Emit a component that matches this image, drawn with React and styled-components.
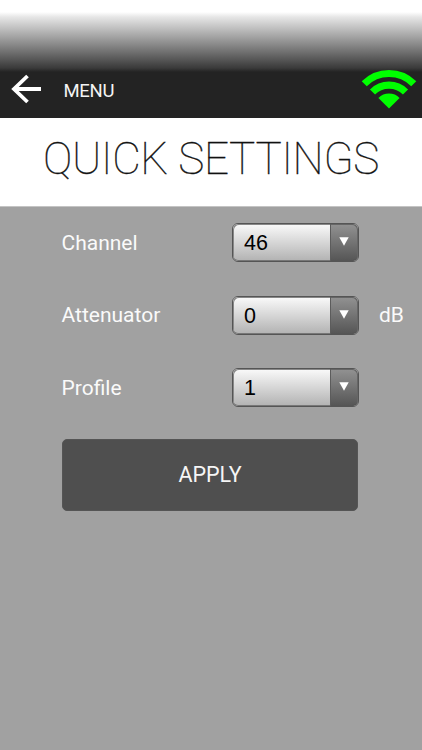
import React from "react";
import styled, { createGlobalStyle } from "styled-components";

const GlobalStyle = createGlobalStyle`
    * {
        box-sizing: border-box;
    }

    body {
        margin: 0;
        background: #a1a1a1;
        font-family: Roboto, sans-serif;
    }
`;

const Page = styled.div`
    display: flex;
    flex-direction: column;
    height: 750px;
    overflow: hidden;
    background: #a1a1a1;
`;

const StatusFade = styled.div`
    flex: none;
    height: 72px;
    background: linear-gradient(#fff 12px, #e6e6e6 17px, #3a3a3a 68px, #232323 72px);
`;

const NavBar = styled.div`
    display: flex;
    flex: none;
    align-items: center;
    height: 46px;
    padding: 0 5px 0 11px;
    background: #232323;
`;

const BackIcon = styled.svg`
    width: 31px;
    height: 30px;
    margin-top: -12px;
`;

const MenuLabel = styled.div`
    flex: 1;
    margin: -9px 0 0 21.5px;
    color: #f4f4f4;
    font-size: 18.5px;
    line-height: 24px;
    letter-spacing: -0.3px;
`;

const SignalIcon = styled.svg`
    width: 56px;
    height: 42px;
    margin-top: -11px;
`;

const Title = styled.div`
    flex: none;
    height: 89px;
    padding-top: 15px;
    border-bottom: 1px solid #c4c4c4;
    background: #fff;
    color: #111;
    font-size: 44px;
    font-weight: 100;
    line-height: 52px;
    letter-spacing: -0.3px;
    text-align: center;
    white-space: nowrap;
    -webkit-text-stroke: 0.3px #111;
`;

const Form = styled.div`
    display: flex;
    flex-direction: column;
    padding: 16px 0 0 61.5px;
`;

const Row = styled.div`
    display: flex;
    align-items: center;
    height: 39px;
    margin-bottom: 33.5px;
`;

const Label = styled.div`
    width: 170.5px;
    color: #fafafa;
    font-size: 21px;
    line-height: 26px;
`;

const Select = styled.div`
    display: flex;
    width: 127px;
    height: 39px;
    border: 1px solid #555;
    border-radius: 6px;
    background: linear-gradient(#fafafa, #b2b2b2);
    overflow: hidden;
`;

const Value = styled.div`
    flex: 1;
    padding: 1px 0 0 11px;
    border-radius: 5px 0 0 5px;
    box-shadow: inset 1px 1px 0 #888, inset 0 -1px 0 #777;
    color: #000;
    font-family: "Liberation Sans", Arial, sans-serif;
    font-size: 21.5px;
    line-height: 36px;
`;

const ArrowBox = styled.div`
    display: flex;
    justify-content: center;
    width: 28px;
    padding: 13px 2px 0 0;
    border-left: 1px solid #5c5c5c;
    border-radius: 0 5px 5px 0;
    background: linear-gradient(#929292, #555);
    box-shadow: inset -1px 1px 0 #666, inset 0 -1px 0 #555;
`;

const Unit = styled.div`
    margin-left: 20px;
    color: #fafafa;
    font-size: 21px;
    line-height: 26px;
`;

const ApplyButton = styled.button`
    width: 296px;
    height: 72px;
    margin: -2px 0 0 0.5px;
    padding: 0;
    border: 1px solid #555;
    border-radius: 5px;
    background: #4f4f4f;
    color: #f6f6f6;
    font-family: Roboto, sans-serif;
    font-size: 21.5px;
`;

const fields = [
    { label: "Channel", value: "46" },
    { label: "Attenuator", value: "0", unit: "dB" },
    { label: "Profile", value: "1" },
];

const Dropdown = ({ value }) => (
    <Select>
        <Value>{value}</Value>
        <ArrowBox>
            <svg width="10" height="9" viewBox="0 0 10 9">
                <path d="M0.3 0.3H9.7L5 8.7Z" fill="#fff" />
            </svg>
        </ArrowBox>
    </Select>
);

const App = () => (
    <>
        <GlobalStyle />
        <Page>
            <StatusFade />
            <NavBar>
                <BackIcon viewBox="0 0 31 30">
                    <path
                        d="M16.5 2L3 15L16.5 28M3 15H30"
                        fill="none"
                        stroke="#fff"
                        strokeWidth="3.8"
                    />
                </BackIcon>
                <MenuLabel>MENU</MenuLabel>
                <SignalIcon viewBox="0 0 56 42">
                    <g fill="none" stroke="#0f0" strokeWidth="7.2">
                        <path d="M3.25 14.75A35 35 0 0 1 52.75 14.75" />
                        <path d="M11.5 23A23.3 23.3 0 0 1 44.5 23" />
                    </g>
                    <path
                        d="M17.4 28.9A15 15 0 0 1 38.6 28.9L28 39.5Z"
                        fill="#0f0"
                    />
                </SignalIcon>
            </NavBar>
            <Title>QUICK SETTINGS</Title>
            <Form>
                {fields.map((field) => (
                    <Row key={field.label}>
                        <Label>{field.label}</Label>
                        <Dropdown value={field.value} />
                        {field.unit && <Unit>{field.unit}</Unit>}
                    </Row>
                ))}
                <ApplyButton>APPLY</ApplyButton>
            </Form>
        </Page>
    </>
);

export default App;
